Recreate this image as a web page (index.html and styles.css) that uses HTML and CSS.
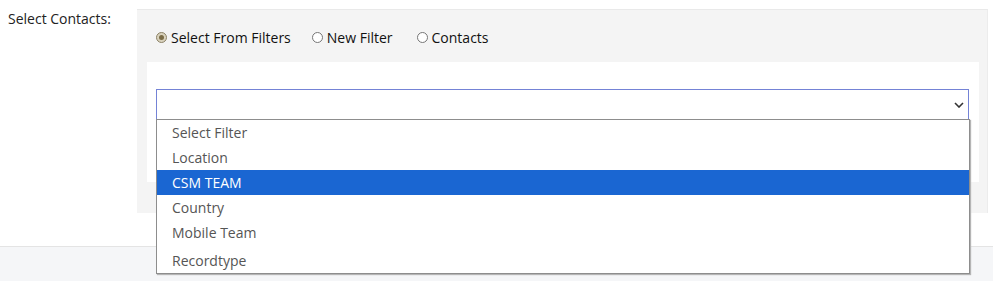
FILE: index.html
```html
<!DOCTYPE html>
<html lang="en">
<head>
    <meta charset="UTF-8">
    <meta name="viewport" content="width=device-width, initial-scale=1.0">
    <title>Select Contacts</title>
    <link rel="stylesheet" href="styles.css">
</head>
<body>

    <div class="form-row">
        <div class="row-label">Select Contacts:</div>

        <div class="contact-panel">
            <div class="radio-group">
                <label class="radio-item">
                    <span class="radio checked"></span>
                    Select From Filters
                </label>
                <label class="radio-item">
                    <span class="radio"></span>
                    New Filter
                </label>
                <label class="radio-item">
                    <span class="radio"></span>
                    Contacts
                </label>
            </div>

            <div class="filter-box">
                <div class="select-wrap">
                    <div class="fake-select">
                        <svg class="chevron" width="10" height="6" viewBox="0 0 10 6">
                            <polyline points="1,1 5,5 9,1" fill="none" stroke="#333" stroke-width="1.6"/>
                        </svg>
                    </div>

                    <!-- open dropdown list -->
                    <ul class="option-list">
                        <li>Select Filter</li>
                        <li>Location</li>
                        <li class="selected">CSM TEAM</li>
                        <li>Country</li>
                        <li>Mobile Team</li>
                        <li class="last">Recordtype</li>
                    </ul>
                </div>
            </div>
        </div>
    </div>

    <div class="footer-band"></div>

</body>
</html>
```

FILE: styles.css
```css
body {
    font-family: "Open Sans", Arial, sans-serif;
    font-size: 14px;
    color: #222;
    background-color: #fff;
    margin: 0;
}
.form-row {
    display: flex;
    align-items: flex-start;
    height: 246px;
}
.row-label {
    width: 137px;
    padding: 9px 0 0 8px;
    box-sizing: border-box;
    color: #222;
}
.contact-panel {
    margin-top: 9px;
    width: 851px;
    background-color: #f4f4f4;
    border-top: 1px solid #e9e9e9;
    border-right: 1px solid #ececec;
    padding: 18px 8px 31px 10px;
    box-sizing: border-box;
}
.radio-group {
    display: flex;
    padding-left: 9px;
    height: 18px;
    align-items: center;
}
.radio-item {
    display: flex;
    align-items: center;
    gap: 4px;
    color: #111;
}
.radio-item + .radio-item {
    margin-left: 21px;
}
.radio-item:last-child {
    margin-left: 24px;
}
.radio {
    width: 11px;
    height: 11px;
    border: 1px solid #767676;
    border-radius: 50%;
    background: #fff;
    box-sizing: border-box;
    position: relative;
}
.radio.checked {
    border-color: #8c8267;
    background: #d9d2bd;
}
.radio.checked::after {
    content: "";
    position: absolute;
    left: 2px;
    top: 2px;
    width: 5px;
    height: 5px;
    border-radius: 50%;
    background: #7a6c47;
}
/* white box holding the select */
.filter-box {
    margin-top: 16px;
    background-color: #fff;
    padding: 27px 10px 62px 9px;
}
.select-wrap {
    position: relative;
}
.fake-select {
    height: 31px;
    border: 1px solid #7483d6;
    border-bottom: none;
    box-sizing: border-box;
    display: flex;
    align-items: center;
    justify-content: flex-end;
    padding-right: 4px;
}
.chevron {
    display: block;
}
.option-list {
    position: absolute;
    top: 30px;
    left: 0;
    width: 814px;
    margin: 0;
    padding: 0;
    list-style: none;
    background: #fff;
    border: 1px solid #8d8d8d;
    box-shadow: 1px 1px 1px #b5b5b5;
    box-sizing: border-box;
    color: #555;
}
.option-list li {
    height: 25px;
    line-height: 25px;
    padding-left: 15px;
}
.option-list li.selected {
    background-color: #1a66d2;
    color: #fff;
}
.option-list li.last {
    margin-top: 3px;
}
.footer-band {
    border-top: 1px solid #e4e4e4;
    background-color: #f5f6f8;
    height: 40px;
}
```
